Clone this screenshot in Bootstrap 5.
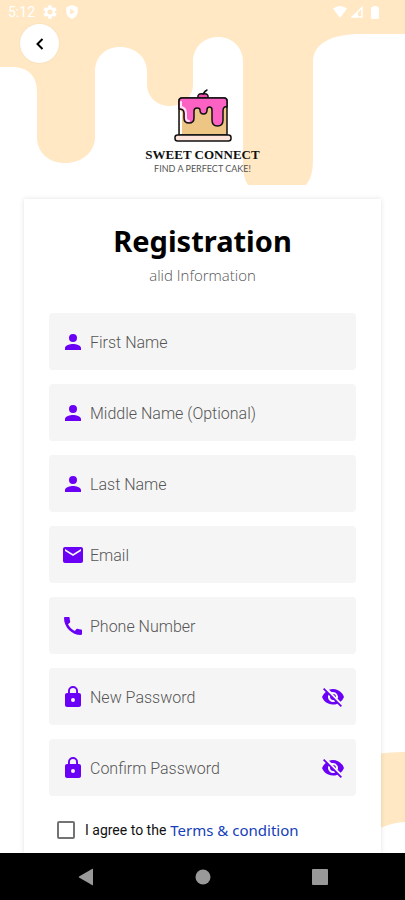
<!DOCTYPE html>
<html lang="en">
<head>
<meta charset="utf-8">
<meta name="viewport" content="width=device-width, initial-scale=1">
<title>Sweet Connect – Registration</title>
<link href="https://cdn.jsdelivr.net/npm/bootstrap@5.3.0/dist/css/bootstrap.min.css" rel="stylesheet">
<style>
  body { font-family: Roboto, "Noto Sans", sans-serif; color: #111; background: #fff; }
  svg { display: block; flex: none; }
  .backdrop { z-index: -1; }
  .wave-low { bottom: 72px; z-index: -1; }
  .status-bar { height: 24px; padding: 0 26px 0 8px; font-size: 14px; line-height: 24px; }
  .back-btn { width: 39px; height: 39px; background: #fff; box-shadow: 0 0 2px rgba(0,0,0,.08); }
  .top-row { padding-left: 20px; }
  .brand { padding-top: 26px; }
  .brand-title { font: 700 13px/16px "Liberation Serif", serif; color: #111; }
  .brand-tag { font: 400 9px/12px Lato, sans-serif; color: #555; }
  .sheet { margin: 24px 24px 0; padding: 24px 25px 8px; background: #fff; box-shadow: 0 0 5px rgba(0,0,0,.12); }
  .sheet-title { font: 700 29px/36px "Noto Sans", sans-serif; color: #000; }
  .sheet-sub { font: 300 15px/20px "Open Sans", sans-serif; color: #555; margin-top: 6px; }
  .fields { gap: 14px; margin-top: 28px; }
  .field { height: 57px; padding: 0 11px 0 12px; background: #f5f5f5; border-radius: 4px; color: #6a00f5; }
  .field .form-control { font-size: 16px; line-height: 24px; padding: 3px 0 0 5px; color: #222; }
  .field .form-control::placeholder { color: #555; font-weight: 300; opacity: 1; }
  .field .btn { color: #6a00f5; }
  .terms { margin-top: 22px; padding-left: 8px; font-size: 14px; line-height: 24px; }
  .terms .form-check-input { width: 18px; height: 18px; margin: 0 10px 0 0; border: 2px solid #737373; border-radius: 2px; }
  .terms a { font: 400 15px/24px "Noto Sans", sans-serif; color: #1440b8; margin-left: 4px; }
  .sys-nav { height: 47px; padding: 0 27px; background: #000; }
</style>
<script src="https://cdn.jsdelivr.net/npm/bootstrap@5.3.0/dist/js/bootstrap.bundle.min.js"></script>
</head>
<body>
<svg class="position-absolute" width="0" height="0" aria-hidden="true">
  <symbol id="i-person" viewBox="0 0 24 24"><path d="M12 12a4 4 0 1 0 0-8 4 4 0 0 0 0 8zm0 2c-2.670 0-8 1.340-8 4v2h16v-2c0-2.660-5.330-4-8-4z"/></symbol>
  <symbol id="i-mail" viewBox="0 0 24 24"><path d="M20 4H4c-1.100 0-1.990.9-1.990 2L2 18c0 1.100.9 2 2 2h16c1.100 0 2-.9 2-2V6c0-1.100-.9-2-2-2zm0 4-8 5-8-5V6l8 5 8-5z"/></symbol>
  <symbol id="i-phone" viewBox="0 0 24 24"><path d="M20.010 15.380c-1.230 0-2.420-.2-3.530-.56a.98.98 0 0 0-1.010.24l-1.570 1.970c-2.830-1.350-5.480-3.900-6.890-6.830l1.950-1.660c.27-.28.35-.67.24-1.020-.37-1.110-.56-2.300-.56-3.530 0-.54-.45-.99-.99-.99H4.190C3.650 3 3 3.240 3 3.990 3 13.280 10.730 21 20.010 21c.71 0 .99-.63.99-1.180v-3.450c0-.54-.45-.99-.99-.99z"/></symbol>
  <symbol id="i-lock" viewBox="0 0 24 24"><path d="M18 8h-1V6A5 5 0 0 0 7 6v2H6c-1.100 0-2 .9-2 2v10c0 1.100.9 2 2 2h12c1.100 0 2-.9 2-2V10c0-1.100-.9-2-2-2zm-6 9a2 2 0 1 1 0-4 2 2 0 0 1 0 4zm3.100-9H8.900V6a3.100 3.100 0 0 1 6.200 0z"/></symbol>
  <symbol id="i-eye-off" viewBox="0 0 24 24"><path d="M12 7a5 5 0 0 1 4.640 6.830l2.920 2.920A11.800 11.800 0 0 0 22.990 12 11.830 11.830 0 0 0 8 4.700l2.160 2.160C10.740 7.130 11.350 7 12 7zM2 4.270l2.740 2.740A11.800 11.800 0 0 0 1 12a11.830 11.830 0 0 0 15.380 6.660L19.730 22 21 20.730 3.270 3zM7.530 9.800l1.550 1.550a3 3 0 0 0 3.570 3.570l1.550 1.550A5 5 0 0 1 7.530 9.800zm4.310-.78 3.150 3.150.02-.16a3 3 0 0 0-3-3z"/></symbol>
</svg>
<div class="d-flex flex-column min-vh-100 position-relative z-0">
  <svg class="backdrop position-absolute top-0 start-0 w-100" viewBox="0 0 405 185" fill="#ffe8c3" aria-hidden="true">
    <path d="M0 0H405V34H361C332 34 313 43 313 62V160Q313 177 306 185H248Q243 177 243 166V62C243 47 232 37 218 37S193 47 193 62V84C193 97 183 106 170 106S147 97 147 84V72C147 57 135 47 120 47S95 57 95 72V137C95 153 81 163 65 163S37 153 37 137V92C37 76 28 67 12 67H0Z"/>
  </svg>
  <svg class="wave-low position-absolute end-0" width="60" height="80" viewBox="0 0 60 80" fill="#ffe8c3" aria-hidden="true">
    <path d="M0 12Q30 4 60 4V74Q48 74 30 82L0 80Z"/>
  </svg>

  <div class="status-bar d-flex align-items-center text-white">
    <span>5:12</span>
    <svg class="ms-2 me-1" width="14" height="14" viewBox="2 2 20 20" fill="#fff"><path d="M19.14 12.94c.04-.3.06-.61.06-.94s-.02-.64-.07-.94l2.03-1.58a.5.5 0 0 0 .12-.61l-1.92-3.32a.5.5 0 0 0-.59-.22l-2.39.96a7 7 0 0 0-1.62-.94l-.36-2.54a.5.5 0 0 0-.48-.41h-3.84a.5.5 0 0 0-.47.41l-.36 2.54c-.59.24-1.13.57-1.62.94l-2.39-.96a.5.5 0 0 0-.59.22L2.74 8.87a.5.5 0 0 0 .12.61l2.03 1.58a6 6 0 0 0 0 1.88l-2.03 1.58a.5.5 0 0 0-.12.61l1.92 3.32c.12.22.37.29.59.22l2.39-.96c.5.38 1.03.7 1.62.94l.36 2.54c.05.24.24.41.48.41h3.84c.24 0 .44-.17.47-.41l.36-2.54c.59-.24 1.13-.56 1.62-.94l2.39.96c.22.08.47 0 .59-.22l1.92-3.32a.5.5 0 0 0-.12-.61zM12 15.6a3.6 3.6 0 1 1 0-7.2 3.6 3.6 0 0 1 0 7.2z"/></svg>
    <svg class="ms-1" width="14" height="14" viewBox="2 1 20 22" fill="#fff"><path fill-rule="evenodd" d="M12 1 3 4.500V11c0 5.550 3.840 10.740 9 12 5.160-1.260 9-6.450 9-12V4.500zM9 7l7.500 4.500L9 16z"/></svg>
    <svg class="ms-auto" width="14" height="12" viewBox="0 0 14 12" fill="#fff"><path d="M0 2.500Q7-2.500 14 2.500L7 12Z"/></svg>
    <svg class="ms-1" width="12" height="12" viewBox="0 0 12 12"><path d="M11 1.500V11H1.500Z" fill="none" stroke="#fff" stroke-width="1.500"/><path d="M7 5V11H0Z" fill="#fff"/></svg>
    <svg class="ms-2" width="8" height="13" viewBox="0 0 8 13" fill="#fff"><path d="M2 1V0H6V1H7Q8 1 8 2V12Q8 13 7 13H1Q0 13 0 12V2Q0 1 1 1Z"/></svg>
  </div>

  <div class="top-row">
    <button type="button" class="back-btn btn border-0 rounded-circle p-0 d-flex align-items-center justify-content-center" aria-label="Back">
      <svg width="8" height="12" viewBox="0 0 8 12" fill="none" stroke="#000" stroke-width="2"><path d="M6.500 1 1.500 6l5 5"/></svg>
    </button>
  </div>

  <header class="brand text-center">
    <svg class="mx-auto" width="58" height="54" viewBox="0 0 58 54" stroke="#111" stroke-width="1.500" stroke-linejoin="round" stroke-linecap="round" aria-hidden="true">
      <path d="M5 46V12Q5 9 8 9H50Q53 9 53 12V46Z" fill="#edc685"/>
      <path d="M6 21V45H8V23Z" fill="#fff" stroke="none"/>
      <path d="M24 9Q23 4 29 5Q35 4 34 9Z" fill="#f04fb0"/>
      <path d="M29 5Q31 2 33 1" fill="none"/>
      <path d="M5 20V12Q5 9 8 9H50Q53 9 53 12V18Q49 17 49 22V31Q49 37 43.500 37T38 31V21Q38 18 35.500 18T33 21Q33 25 29.500 25T26 21Q26 19 23 19T20 22V29Q20 34 15 34T10 29V24Q10 20 5 20Z" fill="#fb62c4"/>
      <path d="M7 13V18Q12 19 12 24V29Q12 32 15 32" fill="none" stroke="#ffe2f3" stroke-width="2"/>
      <rect x="1" y="46" width="56" height="6" rx="2.500" fill="#fde5dc"/>
    </svg>
    <div class="brand-title mt-1">SWEET CONNECT</div>
    <div class="brand-tag">FIND A PERFECT CAKE!</div>
  </header>

  <main class="sheet flex-grow-1">
    <h1 class="sheet-title text-center m-0">Registration</h1>
    <p class="sheet-sub text-center mb-0">alid Information</p>
    <form>
      <div class="fields d-flex flex-column">
        <div class="field d-flex align-items-center">
          <svg width="24" height="24" fill="currentColor"><use href="#i-person"/></svg>
          <input class="form-control border-0 bg-transparent shadow-none" type="text" placeholder="First Name" aria-label="First Name">
        </div>
        <div class="field d-flex align-items-center">
          <svg width="24" height="24" fill="currentColor"><use href="#i-person"/></svg>
          <input class="form-control border-0 bg-transparent shadow-none" type="text" placeholder="Middle Name (Optional)" aria-label="Middle Name (Optional)">
        </div>
        <div class="field d-flex align-items-center">
          <svg width="24" height="24" fill="currentColor"><use href="#i-person"/></svg>
          <input class="form-control border-0 bg-transparent shadow-none" type="text" placeholder="Last Name" aria-label="Last Name">
        </div>
        <div class="field d-flex align-items-center">
          <svg width="24" height="24" fill="currentColor"><use href="#i-mail"/></svg>
          <input class="form-control border-0 bg-transparent shadow-none" type="email" placeholder="Email" aria-label="Email">
        </div>
        <div class="field d-flex align-items-center">
          <svg width="24" height="24" fill="currentColor"><use href="#i-phone"/></svg>
          <input class="form-control border-0 bg-transparent shadow-none" type="tel" placeholder="Phone Number" aria-label="Phone Number">
        </div>
        <div class="field d-flex align-items-center">
          <svg width="24" height="24" fill="currentColor"><use href="#i-lock"/></svg>
          <input class="form-control border-0 bg-transparent shadow-none" type="password" placeholder="New Password" aria-label="New Password">
          <button type="button" class="btn border-0 p-0" aria-label="Show new password">
            <svg width="24" height="24" fill="currentColor"><use href="#i-eye-off"/></svg>
          </button>
        </div>
        <div class="field d-flex align-items-center">
          <svg width="24" height="24" fill="currentColor"><use href="#i-lock"/></svg>
          <input class="form-control border-0 bg-transparent shadow-none" type="password" placeholder="Confirm Password" aria-label="Confirm Password">
          <button type="button" class="btn border-0 p-0" aria-label="Show confirmed password">
            <svg width="24" height="24" fill="currentColor"><use href="#i-eye-off"/></svg>
          </button>
        </div>
      </div>
      <div class="terms d-flex align-items-center">
        <input class="form-check-input" type="checkbox" id="agree">
        <label for="agree">I agree to the</label>
        <a href="#" class="text-decoration-none">Terms &amp; condition</a>
      </div>
    </form>
  </main>

  <nav class="sys-nav d-flex align-items-center justify-content-around" aria-label="System">
    <button type="button" class="btn border-0 p-0" aria-label="Back"><svg width="16" height="18" viewBox="0 0 16 18" fill="#999"><path d="M15 1V17Q15 17.500 14 17L1 9.500Q.5 9 1 8.500L14 1Q15 .5 15 1Z"/></svg></button>
    <button type="button" class="btn border-0 p-0" aria-label="Home"><svg width="16" height="16" viewBox="0 0 16 16" fill="#999"><circle cx="8" cy="8" r="7.500"/></svg></button>
    <button type="button" class="btn border-0 p-0" aria-label="Recent apps"><svg width="16" height="16" viewBox="0 0 16 16" fill="#999"><rect width="16" height="16" rx="1"/></svg></button>
  </nav>
</div>
</body>
</html>
